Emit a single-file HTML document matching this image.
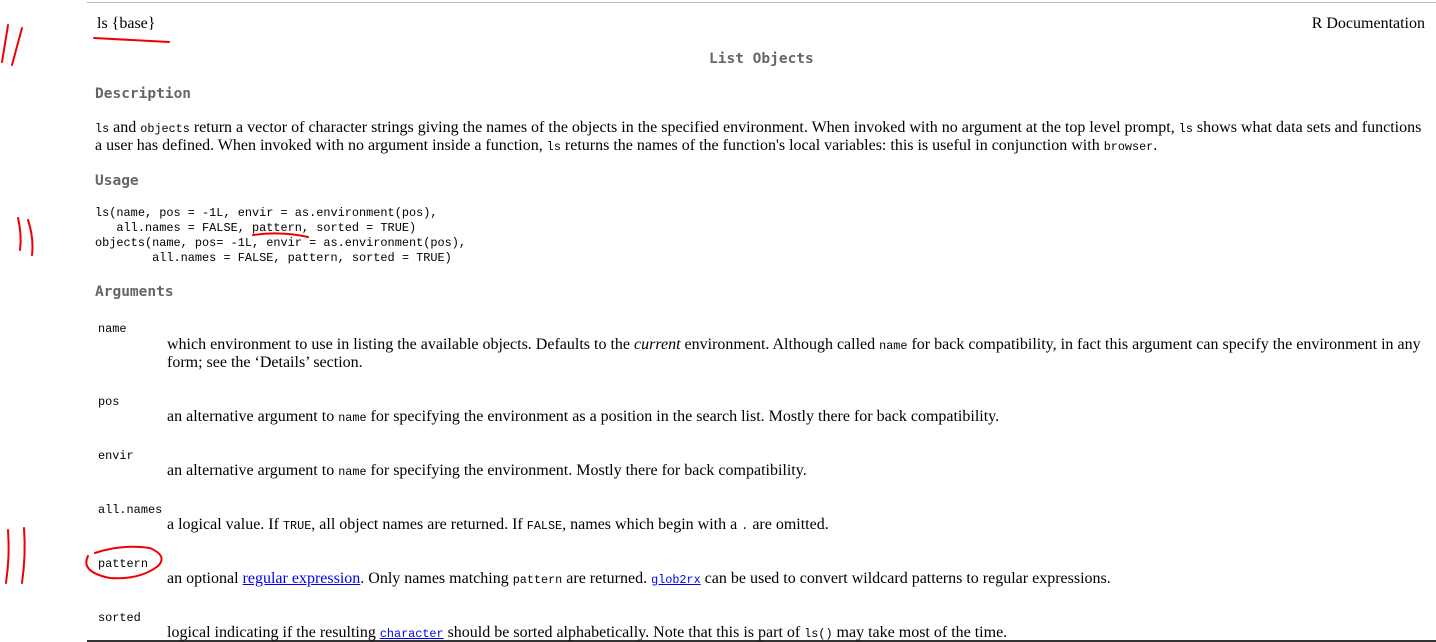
<!DOCTYPE html>
<html><head><meta charset="utf-8"><style>
html,body{margin:0;padding:0;background:#fff;width:1436px;height:642px;overflow:hidden;position:relative}
.a{position:absolute;white-space:nowrap}
.s{font-family:"Liberation Serif",serif;font-size:16px;color:#000}
.m{font-family:"Liberation Mono","DejaVu Sans Mono",monospace;font-size:11.9px;color:#000}
.h{font-family:"DejaVu Sans Mono","Liberation Mono",monospace;font-size:14.5px;font-weight:bold;color:#666}
code{font-family:"Liberation Mono","DejaVu Sans Mono",monospace;font-size:11.8px}
a{color:#00e;text-decoration:underline}
</style></head><body>
<div style="position:absolute;left:87px;top:2px;right:0;height:1px;background:#bbb"></div>
<div style="position:absolute;left:87px;top:640px;right:0;height:2px;background:#333"></div>
<div class="a s" style="left:97px;top:15px">ls {base}</div>
<div class="a s" style="right:11px;top:15px">R Documentation</div>
<div class="a h" style="left:709px;top:51px">List Objects</div>
<div class="a h" style="left:95px;top:86px">Description</div>
<div class="a s" style="left:95px;top:119px"><code>ls</code> and <code>objects</code> return a vector of character strings giving the names of the objects in the specified environment. When invoked with no argument at the top level prompt, <code>ls</code> shows what data sets and functions</div>
<div class="a s" style="left:95px;top:137px">a user has defined. When invoked with no argument inside a function, <code>ls</code> returns the names of the function's local variables: this is useful in conjunction with <code>browser</code>.</div>
<div class="a h" style="left:95px;top:173px">Usage</div>
<div class="a m" style="left:95px;top:206px;line-height:15px;white-space:pre">ls(name, pos = -1L, envir = as.environment(pos),
   all.names = FALSE, pattern, sorted = TRUE)
objects(name, pos= -1L, envir = as.environment(pos),
        all.names = FALSE, pattern, sorted = TRUE)</div>
<div class="a h" style="left:95px;top:284px">Arguments</div>
<div class="a m" style="left:98px;top:322px">name</div>
<div class="a s" style="left:167px;top:336px">which environment to use in listing the available objects. Defaults to the <i>current</i> environment. Although called <code>name</code> for back compatibility, in fact this argument can specify the environment in any</div>
<div class="a s" style="left:167px;top:354px">form; see the ‘Details’ section.</div>
<div class="a m" style="left:98px;top:395px">pos</div>
<div class="a s" style="left:167px;top:408px">an alternative argument to <code>name</code> for specifying the environment as a position in the search list. Mostly there for back compatibility.</div>
<div class="a m" style="left:98px;top:449px">envir</div>
<div class="a s" style="left:167px;top:462px">an alternative argument to <code>name</code> for specifying the environment. Mostly there for back compatibility.</div>
<div class="a m" style="left:98px;top:503px">all.names</div>
<div class="a s" style="left:167px;top:516px">a logical value. If <code>TRUE</code>, all object names are returned. If <code>FALSE</code>, names which begin with a <code>.</code> are omitted.</div>
<div class="a m" style="left:98px;top:557px">pattern</div>
<div class="a s" style="left:167px;top:570px">an optional <a>regular expression</a>. Only names matching <code>pattern</code> are returned. <a><code>glob2rx</code></a> can be used to convert wildcard patterns to regular expressions.</div>
<div class="a m" style="left:98px;top:611px">sorted</div>
<div class="a s" style="left:167px;top:624px">logical indicating if the resulting <a><code>character</code></a> should be sorted alphabetically. Note that this is part of <code>ls()</code> may take most of the time.</div>
<svg width="1436" height="642" style="position:absolute;left:0;top:0" fill="none" stroke="#e00" stroke-width="2" stroke-linecap="round">
<path d="M94 38 Q130 40 169 42"/>
<path d="M8 25 L2 62"/><path d="M22 28 L12 65"/>
<path d="M18 218 Q22 235 20 250"/><path d="M28 220 Q34 238 32 255"/>
<path d="M253 235 Q280 231 308 237"/>
<path d="M8 530 Q10 555 6 583"/><path d="M24 528 Q26 555 22 583"/>
<path d="M95 553 Q120 544 150 548 Q168 556 158 566 Q140 580 110 578 Q80 572 88 556"/>
</svg>
</body></html>
